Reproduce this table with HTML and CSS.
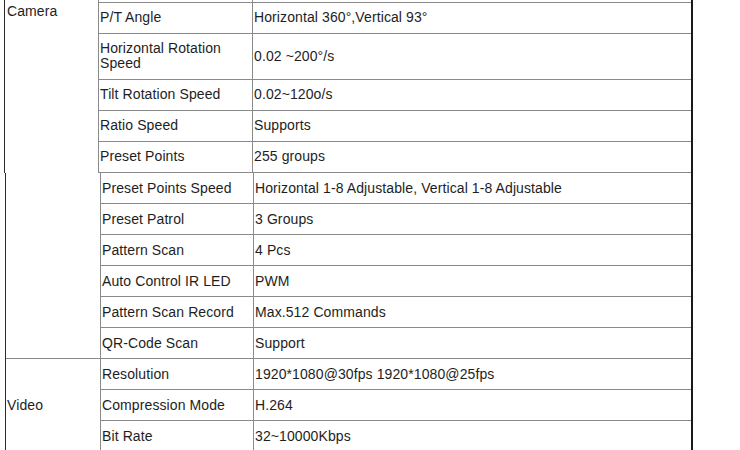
FILE: index.html
```html
<!DOCTYPE html>
<html>
<head>
<meta charset="utf-8">
<link rel="stylesheet" href="styles.css">
</head>
<body>
<table class="spec spec-top">
  <colgroup><col class="c1"><col class="c2"><col class="c3"></colgroup>
  <tr class="spacer"><td class="group group-camera" rowspan="6">Camera</td><td class="lbl"></td><td class="val"></td></tr>
  <tr><td class="lbl">P/T Angle</td><td class="val">Horizontal 360°,Vertical 93°</td></tr>
  <tr class="tall"><td class="lbl">Horizontal Rotation Speed</td><td class="val">0.02 ~200°/s</td></tr>
  <tr><td class="lbl">Tilt Rotation Speed</td><td class="val">0.02~120o/s</td></tr>
  <tr><td class="lbl">Ratio Speed</td><td class="val">Supports</td></tr>
  <tr><td class="lbl">Preset Points</td><td class="val">255 groups</td></tr>
</table>
<table class="spec spec-bottom">
  <colgroup><col class="c1"><col class="c2"><col class="c3"></colgroup>
  <tr><td class="group" rowspan="6"></td><td class="lbl">Preset Points Speed</td><td class="val">Horizontal 1-8 Adjustable, Vertical 1-8 Adjustable</td></tr>
  <tr><td class="lbl">Preset Patrol</td><td class="val">3 Groups</td></tr>
  <tr><td class="lbl">Pattern Scan</td><td class="val">4 Pcs</td></tr>
  <tr><td class="lbl">Auto Control IR LED</td><td class="val">PWM</td></tr>
  <tr><td class="lbl">Pattern Scan Record</td><td class="val">Max.512 Commands</td></tr>
  <tr><td class="lbl">QR-Code Scan</td><td class="val">Support</td></tr>
  <tr><td class="group group-video" rowspan="3">Video</td><td class="lbl">Resolution</td><td class="val">1920*1080@30fps 1920*1080@25fps</td></tr>
  <tr><td class="lbl">Compression Mode</td><td class="val">H.264</td></tr>
  <tr><td class="lbl">Bit Rate</td><td class="val">32~10000Kbps</td></tr>
</table>
</body>
</html>
```
FILE: styles.css
```css
html, body {
  margin: 0;
  padding: 0;
  background: #ffffff;
}
body {
  font-family: "Liberation Sans", Arial, sans-serif;
  font-size: 14px;
  line-height: 15px;
  letter-spacing: 0.1px;
  color: #1e1e1e;
  overflow: hidden;
  height: 450px;
}
.spec {
  border-collapse: separate;
  border-spacing: 0;
  table-layout: fixed;
  border-left: 1px solid #2a2a2a;
  border-right: 2px solid #1a1a1a;
}
.spec td {
  padding: 0 0 0 1px;
  border-right: 1px solid #8a8a8a;
  border-bottom: 1px solid #8a8a8a;
  vertical-align: middle;
  box-sizing: border-box;
  height: 31px;
  overflow: hidden;
}
.spec-top td {
  padding-bottom: 1px;
}
.spec td.val {
  border-right: none;
}
.spec-top {
  margin-left: 4px;
  width: 689px;
}
.spec-top .c1 { width: 94px; }
.spec-top .c2 { width: 154px; }
.spec-top .c3 { width: 438px; }
.spec-top .spacer td {
  height: 3px;
  padding: 0;
}
.spec-top tr.tall td {
  height: 46px;
}
.spec-top td.group {
  border-bottom: none;
}
.group-camera {
  vertical-align: top !important;
  padding-top: 4px !important;
  padding-left: 2px !important;
}
.spec-bottom {
  margin-left: 5px;
  width: 688px;
}
.spec-bottom .c1 { width: 95px; }
.spec-bottom .c2 { width: 153px; }
.spec-bottom .c3 { width: 437px; }
.group-video {
  padding-left: 1px !important;
}
```
